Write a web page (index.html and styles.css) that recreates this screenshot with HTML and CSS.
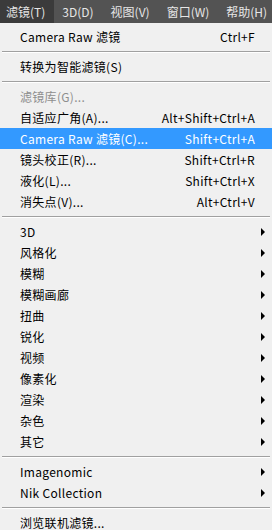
FILE: index.html
```html
<!DOCTYPE html>
<html lang="zh-CN">
<head>
  <meta charset="UTF-8" />
  <title>滤镜</title>
  <link rel="stylesheet" href="styles.css">
</head>
<body>
  <!-- BARRA DE MENU -->
  <div class="menubar">
    <span class="bar-item active">滤镜(T)</span>
    <span class="bar-item">3D(D)</span>
    <span class="bar-item">视图(V)</span>
    <span class="bar-item">窗口(W)</span>
    <span class="bar-item">帮助(H)</span>
  </div>

  <!-- MENU DESPLEGABLE -->
  <div class="menu">
    <div class="row"><span class="label">Camera Raw 滤镜</span><span class="key">Ctrl+F</span></div>
    <div class="sep"></div>
    <div class="row"><span class="label">转换为智能滤镜(S)</span></div>
    <div class="sep"></div>
    <div class="row disabled"><span class="label">滤镜库(G)...</span></div>
    <div class="row"><span class="label">自适应广角(A)...</span><span class="key">Alt+Shift+Ctrl+A</span></div>
    <div class="row selected"><span class="label">Camera Raw 滤镜(C)...</span><span class="key">Shift+Ctrl+A</span></div>
    <div class="row"><span class="label">镜头校正(R)...</span><span class="key">Shift+Ctrl+R</span></div>
    <div class="row"><span class="label">液化(L)...</span><span class="key">Shift+Ctrl+X</span></div>
    <div class="row"><span class="label">消失点(V)...</span><span class="key">Alt+Ctrl+V</span></div>
    <div class="sep"></div>
    <div class="row sub"><span class="label">3D</span></div>
    <div class="row sub"><span class="label">风格化</span></div>
    <div class="row sub"><span class="label">模糊</span></div>
    <div class="row sub"><span class="label">模糊画廊</span></div>
    <div class="row sub"><span class="label">扭曲</span></div>
    <div class="row sub"><span class="label">锐化</span></div>
    <div class="row sub"><span class="label">视频</span></div>
    <div class="row sub"><span class="label">像素化</span></div>
    <div class="row sub"><span class="label">渲染</span></div>
    <div class="row sub"><span class="label">杂色</span></div>
    <div class="row sub"><span class="label">其它</span></div>
    <div class="sep"></div>
    <div class="row sub"><span class="label">Imagenomic</span></div>
    <div class="row sub"><span class="label">Nik Collection</span></div>
    <div class="sep"></div>
    <div class="row"><span class="label">浏览联机滤镜...</span></div>
  </div>
</body>
</html>
```

FILE: styles.css
```css
html, body {
  margin: 0;
  padding: 0;
  height: 100%;
  background-color: #f0f0f0;
  overflow: hidden;
  font-family: "Noto Sans CJK SC", "Noto Sans", sans-serif;
  font-size: 12px;
}

.menubar {
  height: 23px;
  background-color: #535353;
  display: flex;
  align-items: stretch;
  color: #e6e6e6;
  overflow: hidden;
  white-space: nowrap;
}

.bar-item {
  display: flex;
  align-items: center;
  flex-shrink: 0;
  padding: 0 9px 0 8px;
}

.bar-item.active {
  background-color: #3b3b3b;
  padding-left: 6px;
}

.menu {
  padding-top: 3px;
  background-color: #f0f0f0;
  color: #000;
}

.row {
  height: 21px;
  display: flex;
  align-items: center;
  justify-content: space-between;
  padding: 0 17px 0 20px;
  position: relative;
  white-space: nowrap;
  letter-spacing: 0.3px;
}

.row.disabled {
  color: #8e8e8e;
}

.row.selected {
  background-color: #3399ff;
  color: #fff;
}

.row.sub::after {
  content: "";
  position: absolute;
  right: 7px;
  top: 7px;
  border-top: 4px solid transparent;
  border-bottom: 4px solid transparent;
  border-left: 4px solid #000;
}

.sep {
  height: 9px;
  margin: 0 2px;
  display: flex;
  align-items: center;
}

.sep::before {
  content: "";
  flex: 1;
  height: 1px;
  background-color: #a0a0a0;
  box-shadow: 0 1px 0 #fff;
}
```
